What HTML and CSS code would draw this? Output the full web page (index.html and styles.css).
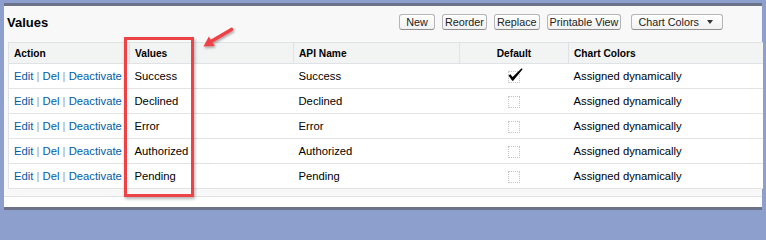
FILE: index.html
```html
<!DOCTYPE html>
<html>
<head>
<meta charset="utf-8">
<link rel="stylesheet" href="styles.css">
</head>
<body>
<div class="frame">
  <div class="block">
    <div class="head">
      <h2 class="title">Values</h2>
      <div class="buttons">
        <button class="btn btn-new">New</button>
        <button class="btn">Reorder</button>
        <button class="btn">Replace</button>
        <button class="btn">Printable View</button>
        <button class="btn btn-menu">Chart Colors<span class="caret"></span></button>
      </div>
    </div>
    <table class="list">
      <colgroup>
        <col class="c-action"><col class="c-values"><col class="c-api"><col class="c-default"><col class="c-colors">
      </colgroup>
      <thead>
        <tr><th>Action</th><th>Values</th><th>API Name</th><th class="center">Default</th><th>Chart Colors</th></tr>
      </thead>
      <tbody>
        <tr>
          <td><a href="#">Edit</a><span class="sep"> | </span><a href="#">Del</a><span class="sep"> | </span><a href="#">Deactivate</a></td>
          <td>Success</td><td>Success</td>
          <td class="center"><span class="chk"><svg class="tick" width="15" height="14" viewBox="0 0 15 14"><path d="M0.5 7.6 L2.3 6.2 L4.6 9.1 L13.6 0.3 L14.6 1.2 L5.2 12.8 L4.2 12.8 Z" fill="#000"/></svg></span></td>
          <td>Assigned dynamically</td>
        </tr>
        <tr>
          <td><a href="#">Edit</a><span class="sep"> | </span><a href="#">Del</a><span class="sep"> | </span><a href="#">Deactivate</a></td>
          <td>Declined</td><td>Declined</td>
          <td class="center"><span class="chk"></span></td>
          <td>Assigned dynamically</td>
        </tr>
        <tr>
          <td><a href="#">Edit</a><span class="sep"> | </span><a href="#">Del</a><span class="sep"> | </span><a href="#">Deactivate</a></td>
          <td>Error</td><td>Error</td>
          <td class="center"><span class="chk"></span></td>
          <td>Assigned dynamically</td>
        </tr>
        <tr>
          <td><a href="#">Edit</a><span class="sep"> | </span><a href="#">Del</a><span class="sep"> | </span><a href="#">Deactivate</a></td>
          <td>Authorized</td><td>Authorized</td>
          <td class="center"><span class="chk"></span></td>
          <td>Assigned dynamically</td>
        </tr>
        <tr>
          <td><a href="#">Edit</a><span class="sep"> | </span><a href="#">Del</a><span class="sep"> | </span><a href="#">Deactivate</a></td>
          <td>Pending</td><td>Pending</td>
          <td class="center"><span class="chk"></span></td>
          <td>Assigned dynamically</td>
        </tr>
      </tbody>
    </table>
  </div>
  <div class="under"></div>
</div>
<div class="callout"></div>
<svg class="arrow" width="44" height="34" viewBox="0 0 44 34">
  <defs>
    <filter id="sh" x="-30%" y="-30%" width="160%" height="160%">
      <feDropShadow dx="1" dy="1.5" stdDeviation="1.2" flood-color="#000" flood-opacity="0.35"/>
    </filter>
  </defs>
  <g filter="url(#sh)">
    <line x1="35.5" y1="7.5" x2="15" y2="19.5" stroke="#ee4346" stroke-width="3.6" stroke-linecap="round"/>
    <polygon points="7.5,24.5 12.8,14.5 18.8,24" fill="#ee4346"/>
  </g>
</svg>
</body>
</html>
```
FILE: styles.css
```css
html {
  margin: 0;
  padding: 0;
  height: 216px;
  overflow: hidden;
  background: #8c9fcd;
}
body {
  margin: 0;
  padding: 0;
  background: #8c9fcd;
  font-family: "Liberation Sans", Arial, sans-serif;
  color: #000;
  width: 766px;
  height: 216px;
  overflow: hidden;
  position: relative;
}
.frame {
  margin: 3px 4px 0 4px;
}
.block {
  background: #f8f8f8;
  border-top: 3px solid #6c7389;
  border-bottom: 1px solid #e2e2e2;
  padding-bottom: 7px;
}
.head {
  height: 36px;
  display: flex;
  align-items: flex-start;
}
.title {
  margin: 9px 0 0 3px;
  font-size: 13px;
  line-height: 15px;
  font-weight: bold;
  color: #000;
}
.buttons {
  margin: 8px 39px 0 auto;
  display: flex;
  gap: 7px;
}
.btn {
  height: 16px;
  padding: 0 2px;
  margin: 0;
  border: 1px solid #b5b5b5;
  border-bottom-color: #8f8f8f;
  border-radius: 3px;
  background: linear-gradient(#ffffff, #f1f1f1);
  font-family: "Liberation Sans", Arial, sans-serif;
  font-size: 10.8px;
  line-height: 14px;
  color: #222;
  display: flex;
  align-items: center;
}
.btn-new {
  padding: 0 6px;
}
.btn-menu {
  margin-left: 3px;
  padding: 0 9px 0 6px;
  gap: 8px;
}
.caret {
  width: 0;
  height: 0;
  border-left: 3px solid transparent;
  border-right: 3px solid transparent;
  border-top: 4px solid #333;
}
.list {
  margin-left: 4px;
  width: 754px;
  border-collapse: collapse;
  table-layout: fixed;
  background: #fff;
  border-left: 1px solid #e0e3e5;
}
.c-action { width: 121px; }
.c-values { width: 164px; }
.c-api { width: 166px; }
.c-default { width: 109px; }
.c-colors { width: 194px; }
.list th {
  height: 20px;
  padding: 0 5px;
  background: #f2f3f3;
  border-top: 1px solid #e0e3e5;
  border-bottom: 1px solid #e0e3e5;
  font-size: 10.2px;
  font-weight: bold;
  text-align: left;
  color: #000;
  white-space: nowrap;
}
.list th + th {
  border-left: 1px solid #e0e3e5;
}
.list td {
  height: 24px;
  padding: 0 5px;
  border-bottom: 1px solid #e3e3e3;
  font-size: 11.25px;
  color: #000;
  white-space: nowrap;
  vertical-align: middle;
}
.list .center {
  text-align: center;
}
.list a {
  color: #015ba7;
  text-decoration: none;
}
.sep {
  color: #a0a0a0;
}
.chk {
  display: inline-block;
  width: 10px;
  height: 10px;
  border: 1px dotted #c4c4c4;
  vertical-align: middle;
  position: relative;
}
.tick {
  position: absolute;
  left: -1px;
  top: -4px;
}
.under {
  height: 10px;
  background: #fff;
  border-bottom: 3px solid #6c7389;
}
.callout {
  position: absolute;
  left: 124px;
  top: 37px;
  width: 64px;
  height: 154px;
  border: 3px solid #ee4346;
  box-shadow: 1px 2px 3px rgba(0, 0, 0, 0.3);
}
.arrow {
  position: absolute;
  left: 196px;
  top: 22px;
}
```
